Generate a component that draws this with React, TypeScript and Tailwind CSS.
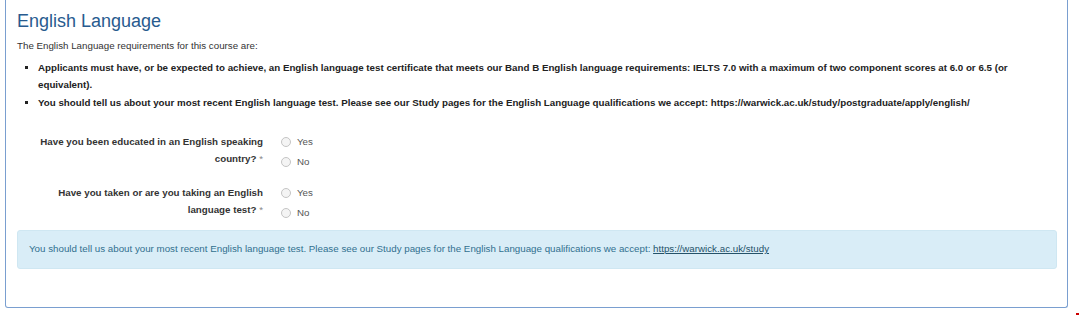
export default function App() {
  const radio = (label: string) => (
    <label className="flex items-center h-[20px] text-[9.75px] text-[#555]">
      <span className="inline-block w-[10px] h-[10px] rounded-full border border-[#c4c4c4] bg-[#f4f4f4] mr-[6px]" />
      {label}
    </label>
  );

  const required = "after:content-['_*'] after:font-normal after:text-[#888]";

  return (
    <div className="w-[1080px] h-[317px] bg-white font-['Liberation_Sans',Arial,sans-serif] relative">
      <div className="ml-[5px] w-[1063px] h-[308px] border border-t-0 border-[#7a9fd0] rounded-b-[3px] pl-[11px] pr-[10px] pt-[10px]">
        <h2 className="text-[18px] leading-[22px] text-[#285b8f]">English Language</h2>
        <p className="mt-[6px] text-[9.75px] leading-[16px] text-[#333]">The English Language requirements for this course are:</p>
        <ul className="mt-[5px] pl-[21px] list-[square] text-[9.75px] leading-[17px] font-bold text-[#222] space-y-[1px]">
          <li>
            Applicants must have, or be expected to achieve, an English language test certificate that meets our Band B English language requirements: IELTS 7.0 with a maximum of two component scores at 6.0 or 6.5 (or equivalent).
          </li>
          <li>
            You should tell us about your most recent English language test. Please see our Study pages for the English Language qualifications we accept: https://warwick.ac.uk/study/postgraduate/apply/english/
          </li>
        </ul>

        <div className="mt-[22px] flex flex-col gap-[12px]">
          <div className="flex">
            <div className={`w-[246px] text-right text-[9.75px] leading-[17px] font-bold text-[#333] pl-[14px] ${required}`}>
              Have you been educated in an English speaking country?
            </div>
            <div className="ml-[18px] -mt-[1px]">
              {radio("Yes")}
              {radio("No")}
            </div>
          </div>
          <div className="flex">
            <div className={`w-[246px] text-right text-[9.75px] leading-[17px] font-bold text-[#333] pl-[34px] ${required}`}>
              Have you taken or are you taking an English language test?
            </div>
            <div className="ml-[18px] -mt-[1px]">
              {radio("Yes")}
              {radio("No")}
            </div>
          </div>
        </div>

        <div className="mt-[7px] h-[39px] flex items-center px-[11px] bg-[#d9edf7] border border-[#cfe7f2] rounded-[3px] text-[9.75px] text-[#31708f]">
          <span>
            You should tell us about your most recent English language test. Please see our Study pages for the English Language qualifications we accept:{" "}
            <a className="underline text-[#245269]">https://warwick.ac.uk/study</a>
          </span>
        </div>
      </div>
      <span className="absolute left-[1076px] top-[313px] w-[3px] h-[2px] bg-[#c00]" />
    </div>
  );
}
